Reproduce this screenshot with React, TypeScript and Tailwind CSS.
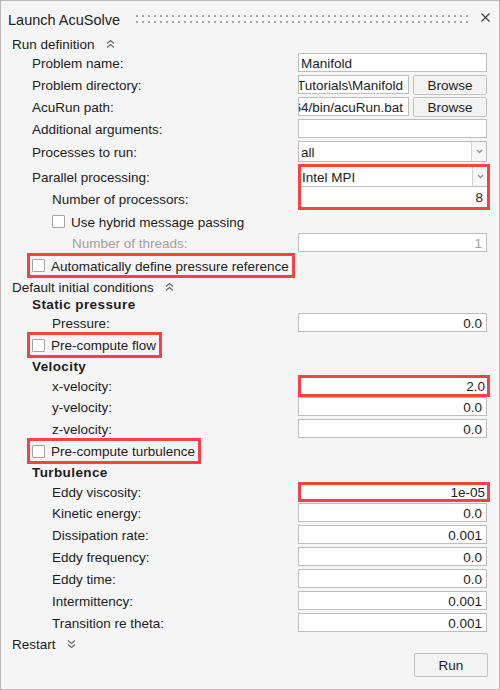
import type { ReactNode } from "react";

const RED = "border-[#f24444]";

function Chevrons({ down = false }: { down?: boolean }) {
  return (
    <svg width="9" height="10" viewBox="0 0 9 10" className="ml-[11px] shrink-0" fill="none" stroke="#6a6a6a" strokeWidth="1.2">
      {down ? (
        <path d="M1 1.5l3.5 3 3.5-3M1 5.5l3.5 3 3.5-3" />
      ) : (
        <path d="M1 4.5l3.5-3 3.5 3M1 8.5l3.5-3 3.5 3" />
      )}
    </svg>
  );
}

function Arrow() {
  return (
    <div className="flex w-[15px] shrink-0 items-center justify-center border-l border-[#d2d2d2] bg-[#f7f7f7]">
      <svg width="7" height="5" viewBox="0 0 7 5" fill="none" stroke="#8c8c8c" strokeWidth="1.3">
        <path d="M1 1l2.5 2.5L6 1" />
      </svg>
    </div>
  );
}

function Check() {
  return <span className="h-[13px] w-[13px] shrink-0 rounded-[1px] border border-[#a3a3a3] bg-white" />;
}

function Box({ children, className = "" }: { children?: ReactNode; className?: string }) {
  return (
    <div className={`flex h-[19px] w-[189px] items-center justify-end border border-[#bdbdbd] bg-white pr-[4px] pt-[2px] ${className}`}>
      {children}
    </div>
  );
}

function RedBox({ children, h }: { children: ReactNode; h: string }) {
  return (
    <div className={`flex w-[192px] items-center justify-end border-[3px] ${RED} bg-white pr-[2px] pt-[2px] ${h}`}>
      {children}
    </div>
  );
}

function Row({
  label,
  indent,
  h,
  labelH = "h-[19px]",
  children,
}: {
  label: ReactNode;
  indent: string;
  h: string;
  labelH?: string;
  children?: ReactNode;
}) {
  return (
    <div className={`flex items-start ${h}`}>
      <div className={`flex w-[297px] shrink-0 items-center pt-[2px] ${labelH} ${indent}`}>{label}</div>
      {children}
    </div>
  );
}

function Section({ title, h, down = false }: { title: string; h: string; down?: boolean }) {
  return (
    <div className={`flex items-center pl-[11px] ${h}`}>
      <span className="pt-[2px]">{title}</span>
      <Chevrons down={down} />
    </div>
  );
}

function RedCheck({ label, h }: { label: string; h: string }) {
  return (
    <div className={`flex ${h}`}>
      <div className={`ml-[26px] flex items-center gap-[6px] border-[3px] ${RED} pl-[2px] pr-[3px]`}>
        <Check />
        <span className="pt-[2px]">{label}</span>
      </div>
    </div>
  );
}

const turbulence: [string, string][] = [
  ["Kinetic energy:", "0.0"],
  ["Dissipation rate:", "0.001"],
  ["Eddy frequency:", "0.0"],
  ["Eddy time:", "0.0"],
  ["Intermittency:", "0.001"],
  ["Transition re theta:", "0.001"],
];

export default function App() {
  return (
    <div className="h-[690px] w-[500px] border border-[#b9b9b9] bg-[#f5f5f5] font-['Liberation_Sans',Arial,sans-serif] text-[13.5px] leading-none text-[#1c1c1c]">
      {/* title bar */}
      <div className="flex h-[33px] items-center pl-[7px] pr-[9px]">
        <span className="pt-[6px] text-[14.5px] text-[#222]">Launch AcuSolve</span>
        <svg className="ml-[16px] mr-[12px] mt-[3px] h-[8px] flex-1">
          <defs>
            <pattern id="grip" width="6" height="6" patternUnits="userSpaceOnUse">
              <rect width="2" height="2" fill="#a5a5a5" />
            </pattern>
          </defs>
          <rect width="100%" height="8" fill="url(#grip)" />
        </svg>
        <svg width="9" height="9" viewBox="0 0 9 9" stroke="#3a3a3a" strokeWidth="1.1">
          <path d="M0.5 0.5l8 8M8.5 0.5l-8 8" />
        </svg>
      </div>

      <Section title="Run definition" h="h-[19px]" />

      <Row label="Problem name:" indent="pl-[31px]" h="h-[22px]">
        <Box className="justify-start pl-[2px]">Manifold</Box>
      </Row>
      <Row label="Problem directory:" indent="pl-[31px]" h="h-[22px]">
        <div className="flex h-[19px] w-[111px] items-center justify-end overflow-hidden whitespace-nowrap border border-[#bdbdbd] bg-white pr-[5px] pt-[2px]">
          <span className="shrink-0">D:\Tutorials\Manifold</span>
        </div>
        <div className="ml-[4px] flex h-[20px] w-[74px] items-center justify-center rounded-[2px] border border-[#c2c2c2] bg-[#f3f3f3] pt-[2px]">
          Browse
        </div>
      </Row>
      <Row label="AcuRun path:" indent="pl-[31px]" h="h-[22px]">
        <div className="flex h-[19px] w-[111px] items-center justify-end overflow-hidden whitespace-nowrap border border-[#bdbdbd] bg-white pr-[5px] pt-[2px]">
          <span className="shrink-0">hwcfdsolvers/acusolve/win64/bin/acuRun.bat</span>
        </div>
        <div className="ml-[4px] flex h-[20px] w-[74px] items-center justify-center rounded-[2px] border border-[#c2c2c2] bg-[#f3f3f3] pt-[2px]">
          Browse
        </div>
      </Row>
      <Row label="Additional arguments:" indent="pl-[31px]" h="h-[22px]">
        <Box />
      </Row>
      <Row label="Processes to run:" indent="pl-[31px]" h="h-[23px]" labelH="h-[21px]">
        <div className="flex h-[21px] w-[189px] border border-[#bdbdbd] bg-white">
          <div className="flex flex-1 items-center pl-[2px] pt-[2px]">all</div>
          <Arrow />
        </div>
      </Row>

      {/* parallel processing group */}
      <div className="flex h-[46px]">
        <div className="flex w-[297px] shrink-0 flex-col pt-[2px]">
          <div className="flex h-[24px] items-center pl-[31px]">Parallel processing:</div>
          <div className="flex h-[22px] items-center pl-[51px]">Number of processors:</div>
        </div>
        <div className={`flex w-[192px] flex-col border-[3px] ${RED} bg-white`}>
          <div className="flex h-[20px] border-b border-[#bdbdbd]">
            <div className="flex flex-1 items-center pl-[1px] pt-[2px]">Intel MPI</div>
            <Arrow />
          </div>
          <div className="flex flex-1 items-center justify-end pr-[4px] pt-[2px]">8</div>
        </div>
      </div>

      <div className="flex h-[23px] items-center gap-[6px] pl-[51px]">
        <Check />
        <span className="pt-[2px]">Use hybrid message passing</span>
      </div>
      <Row label={<span className="text-[#a0a0a0]">Number of threads:</span>} indent="pl-[71px]" h="h-[20px]">
        <Box className="bg-[#f4f4f4] text-[#9c9c9c]">1</Box>
      </Row>
      <RedCheck label="Automatically define pressure reference" h="h-[25px]" />

      <Section title="Default initial conditions" h="h-[17px]" />
      <div className="flex h-[18px] items-center pl-[31px] pt-[1px] font-bold tracking-[0.4px]">Static pressure</div>
      <Row label="Pressure:" indent="pl-[51px]" h="h-[19px]">
        <Box>0.0</Box>
      </Row>
      <RedCheck label="Pre-compute flow" h="h-[26px]" />
      <div className="flex h-[17px] items-center pl-[31px] pt-[1px] font-bold tracking-[0.4px]">Velocity</div>
      <Row label="x-velocity:" indent="pl-[51px]" h="h-[22px]" labelH="h-[22px]">
        <RedBox h="h-[22px]">2.0</RedBox>
      </Row>
      <Row label="y-velocity:" indent="pl-[51px]" h="h-[22px]">
        <Box>0.0</Box>
      </Row>
      <Row label="z-velocity:" indent="pl-[51px]" h="h-[19px]">
        <Box>0.0</Box>
      </Row>
      <RedCheck label="Pre-compute turbulence" h="h-[26px]" />
      <div className="flex h-[18px] items-center pl-[31px] font-bold tracking-[0.4px]">Turbulence</div>
      <Row label="Eddy viscosity:" indent="pl-[51px]" h="h-[21px]" labelH="h-[20px]">
        <RedBox h="h-[20px]">1e-05</RedBox>
      </Row>
      {turbulence.map(([label, value]) => (
        <Row key={label} label={label} indent="pl-[51px]" h="h-[22px]">
          <Box>{value}</Box>
        </Row>
      ))}

      <Section title="Restart" h="h-[18px]" down />

      <div className="flex justify-end pr-[11px]">
        <div className="flex h-[24px] w-[74px] items-center justify-center rounded-[2px] border border-[#c2c2c2] bg-[#f3f3f3] pt-[2px]">
          Run
        </div>
      </div>
    </div>
  );
}
